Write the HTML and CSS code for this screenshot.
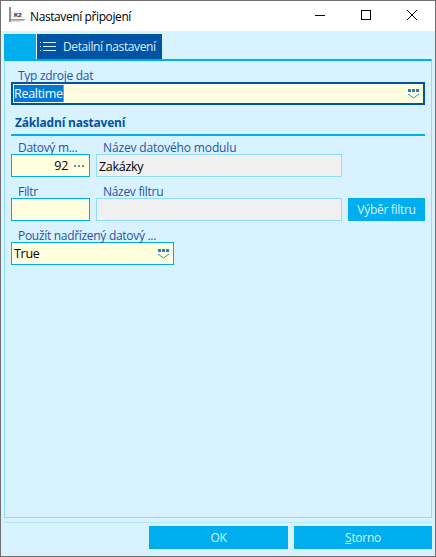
FILE: index.html
```html
<!DOCTYPE html>
<html lang="cs">
<head>
  <meta charset="UTF-8" />
  <title>Nastavení připojení</title>
  <link rel="stylesheet" href="styles.css">
</head>
<body>
  <div class="window">
    <div class="titlebar">
      <svg class="app-icon" width="16" height="16" viewBox="0 0 16 16">
        <rect x="0" y="0" width="2" height="15" fill="#8f8f8f"/>
        <rect x="2" y="12" width="14" height="1" fill="#9a9a9a"/>
        <rect x="2" y="13" width="13" height="1" fill="#bdbdbd"/>
        <rect x="2" y="14" width="10" height="1" fill="#dedede"/>
        <rect x="2" y="4" width="12" height="7" fill="#f0f0f0"/>
        <text x="5" y="10" class="app-icon-text">K2</text>
      </svg>
      <span class="title">Nastavení připojení</span>
      <div class="win-buttons">
        <svg class="win-btn" width="46" height="30" viewBox="0 0 46 30"><path d="M18 14.5h10" stroke="#000" fill="none"/></svg>
        <svg class="win-btn" width="46" height="30" viewBox="0 0 46 30"><rect x="18.5" y="9.5" width="9" height="9" stroke="#000" fill="none"/></svg>
        <svg class="win-btn" width="46" height="30" viewBox="0 0 46 30"><path d="M18 9l10 10M28 9l-10 10" stroke="#000" fill="none"/></svg>
      </div>
    </div>

    <div class="content">
      <div class="tabs">
        <div class="tab-blank"></div>
        <div class="tab">
          <svg width="16" height="10" viewBox="0 0 16 10">
            <path d="M0 .5h1M3 .5h13M0 4.5h1M3 4.5h13M0 8.5h1M3 8.5h13" stroke="#cfeeff" fill="none"/>
          </svg>
          <span>Detailní nastavení</span>
        </div>
      </div>

      <div class="panel">
        <div class="label first-label">Typ zdroje dat</div>
        <div class="input combo focused">
          <span class="selected">Realtime</span><span class="caret"></span>
          <svg class="combo-icon" width="13" height="11" viewBox="0 0 13 11">
            <path d="M1 1h3v3H1zM5 1h3v3H5zM9 1h3v3H9z" fill="#2f7cc4"/>
            <path d="M1 6l5.5 4L12 6" stroke="#2f8fd0" fill="none"/>
          </svg>
        </div>

        <div class="section">Základní nastavení</div>

        <div class="form-grid">
          <div class="label">Datový m...</div>
          <div class="label label-wide">Název datového modulu</div>
          <div></div>
          <div class="input number">
            <span>92</span>
            <svg class="dots" width="10" height="2" viewBox="0 0 10 2">
              <path d="M0 0h2v2H0zM4 0h2v2H4zM8 0h2v2H8z" fill="#5f8fc0"/>
            </svg>
          </div>
          <div class="input readonly">Zakázky</div>
          <div></div>

          <div class="label row-label">Filtr</div>
          <div class="label row-label">Název filtru</div>
          <div class="row-label"></div>
          <div class="input"></div>
          <div class="input readonly"></div>
          <button class="btn">Výběr filtru</button>
        </div>

        <div class="label row-label">Použít nadřízený datový ...</div>
        <div class="input combo small">
          <span>True</span>
          <svg class="combo-icon" width="13" height="11" viewBox="0 0 13 11">
            <path d="M1 1h3v3H1zM5 1h3v3H5zM9 1h3v3H9z" fill="#2f7cc4"/>
            <path d="M1 6l5.5 4L12 6" stroke="#2f8fd0" fill="none"/>
          </svg>
        </div>
      </div>

      <div class="footer">
        <button class="btn btn-ok">OK</button>
        <button class="btn btn-storno"><u>S</u>torno</button>
      </div>
    </div>
  </div>
</body>
</html>
```

FILE: styles.css
```css
* {
  box-sizing: border-box;
}

body {
  margin: 0;
  font-family: "Open Sans", "Noto Sans", sans-serif;
  font-size: 12px;
  background: #fff;
}

.window {
  width: 436px;
  height: 557px;
  border: 1px solid #6f6f6f;
  display: flex;
  flex-direction: column;
}

.titlebar {
  height: 30px;
  background: #fff;
  display: flex;
  align-items: center;
  padding-left: 8px;
  flex-shrink: 0;
}

.app-icon {
  margin: 0 5px 2px 0;
}

.app-icon-text {
  font-family: "Liberation Sans", sans-serif;
  font-size: 6px;
  font-weight: bold;
  fill: #222;
}

.title {
  color: #000;
  font-size: 12px;
  letter-spacing: -0.4px;
}

.win-buttons {
  margin-left: auto;
  display: flex;
}

.win-btn {
  display: block;
}

.content {
  flex: 1;
  background: #d9f2ff;
  padding: 3px 3px 7px 3px;
  display: flex;
  flex-direction: column;
}

.tabs {
  display: flex;
  height: 25px;
  flex-shrink: 0;
}

.tab-blank {
  width: 32px;
  background: #00aeef;
}

.tab {
  width: 125px;
  margin-left: 1px;
  background: #0054a6;
  color: #d9f2ff;
  display: flex;
  align-items: center;
  gap: 7px;
  padding-left: 3px;
  letter-spacing: -0.4px;
  box-shadow: -1px 0 0 #fff;
}

.panel {
  flex: 1;
  border: 1px solid #8fdcfb;
  border-top: 2px solid #00aeef;
  padding: 0 5px 0 6px;
}

.label {
  height: 15px;
  line-height: 17px;
  padding-left: 7px;
  color: #1f55a5;
  letter-spacing: -0.3px;
  white-space: nowrap;
}

.label-wide {
  letter-spacing: -0.15px;
}

.first-label {
  margin-top: 6px;
}

.row-label {
  margin-top: 6px;
}

.input {
  height: 23px;
  line-height: 23px;
  border: 1px solid #00aeef;
  background: #ffffe0;
  color: #000;
  padding-left: 2px;
  font-size: 12.5px;
  letter-spacing: -0.3px;
}

.combo {
  display: flex;
  align-items: center;
  padding-right: 3px;
}

.combo-icon {
  margin-left: auto;
  flex-shrink: 0;
}

.focused {
  border: 2px solid #0054a6;
  padding-left: 1px;
  width: 414px;
}

.selected {
  background: #0078d7;
  color: #fff;
  line-height: 17px;
}

.caret {
  width: 1px;
  height: 17px;
  background: #f08020;
}

.section {
  margin-top: 9px;
  height: 22px;
  line-height: 17px;
  width: 414px;
  padding-left: 4px;
  font-weight: bold;
  color: #0054a6;
  letter-spacing: -0.2px;
  border-bottom: 2px solid #00aeef;
}

.form-grid {
  display: grid;
  grid-template-columns: 79px 246px 77px;
  column-gap: 6px;
  margin-top: 3px;
}

.number {
  display: flex;
  justify-content: flex-end;
  align-items: center;
  gap: 6px;
  padding-right: 5px;
}

.readonly {
  background: #f0f0f0;
  border-color: #8fdcfb;
}

.small {
  width: 163px;
}

.btn {
  border: none;
  background: #00aeef;
  color: #d9f2ff;
  font-family: inherit;
  font-size: 12px;
  letter-spacing: -0.3px;
  padding: 0;
  height: 23px;
}

.footer {
  display: flex;
  justify-content: flex-end;
  gap: 6px;
  margin-top: 4px;
  padding-top: 3px;
  border-top: 1px solid #b5e6fb;
  flex-shrink: 0;
}

.btn-ok {
  width: 139px;
}

.btn-storno {
  width: 138px;
}
```
